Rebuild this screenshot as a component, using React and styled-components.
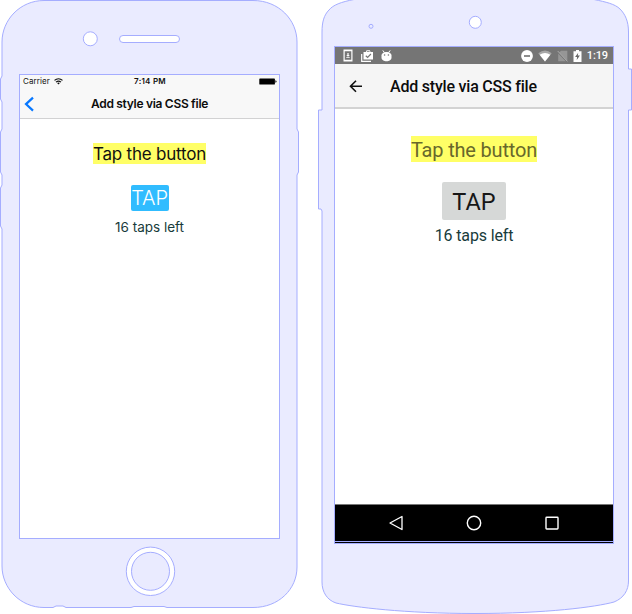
import React from "react";
import styled, { createGlobalStyle } from "styled-components";

const GlobalStyle = createGlobalStyle`
  * { box-sizing: border-box; }
  body { margin: 0; background: #fff; }
`;

const LINE = "#a5adff";
const SHELL = "#eaebff";

const Stage = styled.main`
  display: grid;
  grid-template-columns: 316px 316px;
  width: 632px;
  height: 614px;
  overflow: hidden;
`;

const Device = styled.section`
  position: relative;
  height: 614px;
  padding: ${(p) => p.$inset};
  font-family: ${(p) => p.$font}, sans-serif;
`;

const Shell = styled.svg`
  position: absolute;
  inset: 0;
  width: 316px;
  height: 614px;
`;

const Screen = styled.div`
  position: relative;
  display: flex;
  flex-direction: column;
  width: ${(p) => p.$w}px;
  height: ${(p) => p.$h}px;
  border: 1px solid ${LINE};
  background: #fff;
`;

const IosHeader = styled.header`
  height: 44px;
  background: #f8f8f8;
  border-bottom: 1px solid #d2d2d3;
`;

const IosStatus = styled.div`
  display: grid;
  grid-template-columns: 1fr auto 1fr;
  align-items: center;
  height: 13px;
  padding: 0 2px 0 3px;
  font-size: 8px;
  line-height: 13px;
  color: #111;
`;

const Carrier = styled.span`
  display: flex;
  align-items: center;
  gap: 4px;
  letter-spacing: 0.08px;
`;

const Clock = styled.span`
  font-weight: 600;
  letter-spacing: 0.25px;
`;

const BatterySlot = styled.span`
  display: flex;
  justify-content: flex-end;
`;

const IosNav = styled.div`
  display: grid;
  grid-template-columns: 20px 1fr 20px;
  align-items: center;
  height: 31px;
  padding: 0 4px;
`;

const Title = styled.h1`
  margin: 0;
  font-size: ${(p) => p.$size}px;
  font-weight: ${(p) => p.$weight};
  letter-spacing: ${(p) => p.$track || 0}px;
  line-height: 20px;
  text-align: ${(p) => p.$align || "left"};
  white-space: nowrap;
  color: #0c0c0c;
`;

const Content = styled.div`
  flex: 1;
  display: flex;
  flex-direction: column;
  align-items: center;
  padding-top: ${(p) => p.$top}px;
`;

const Highlight = styled.p`
  display: flex;
  justify-content: center;
  margin: 0;
  width: ${(p) => p.$w}px;
  height: ${(p) => p.$h}px;
  background: #ffff66;
  color: ${(p) => p.$color};
  font-size: ${(p) => p.$size}px;
  line-height: ${(p) => p.$line}px;
  letter-spacing: ${(p) => p.$track}px;
  white-space: nowrap;
`;

const TapButton = styled.button`
  display: flex;
  justify-content: center;
  margin: ${(p) => p.$gap}px 0 0;
  padding: 0;
  border: 0;
  border-radius: 2px;
  width: ${(p) => p.$w}px;
  height: ${(p) => p.$h}px;
  background: ${(p) => p.$bg};
  color: ${(p) => p.$color};
  font-family: inherit;
  font-size: ${(p) => p.$size}px;
  font-weight: ${(p) => p.$weight};
  line-height: ${(p) => p.$line}px;
  letter-spacing: ${(p) => p.$track}px;
`;

const Remaining = styled.p`
  margin: ${(p) => p.$gap}px 0 0;
  font-size: ${(p) => p.$size}px;
  line-height: 20px;
  letter-spacing: ${(p) => p.$track}px;
  color: #183b3b;
`;

const AndroidStatus = styled.div`
  display: flex;
  align-items: center;
  justify-content: space-between;
  height: 17px;
  padding: 0 5px 0 8px;
  background: #757575;
  color: #fff;
  font-size: 11px;
  font-weight: 500;
  letter-spacing: -0.1px;
  line-height: 17px;
`;

const StatusGroup = styled.span`
  display: flex;
  align-items: center;
  gap: ${(p) => p.$gap}px;
`;

const AppBar = styled.header`
  display: flex;
  align-items: center;
  height: 45px;
  padding: 2px 0 0 14px;
  gap: 27px;
  background: #f5f5f5;
  border-bottom: 2px solid #d3d3d3;
`;

const NavBar = styled.nav`
  display: flex;
  align-items: center;
  justify-content: space-between;
  height: 37px;
  padding: 0 53px;
  border-top: 1px solid #777;
  background: #000;
`;

const ScreenEdge = styled.div`
  height: 2px;
  background: #000;
  border-top: 1px solid ${LINE};
`;

function IosShell() {
  return (
    <Shell viewBox="0 0 316 614" fill={SHELL} stroke={LINE}>
      <path d="M44 .5H253C279 .5 297 20 297 42V129L298.5 132V172L297 175V567C297 589 279 607.5 253 607.5H167L164 606.5H134L131 607.5H66L63 606H56L53 607.5H44C20 607.5 2 588 2 566V229L.5 226V188L2 185V175L.5 172V132L2 129V102L.5 99V79L2 76V42C2 20 20 .5 44 .5Z" />
      <g fill="#fff">
        <circle cx="90.3" cy="38.8" r="7" />
        <rect x="119.5" y="35.5" width="60" height="7" rx="3.5" />
        <circle cx="150.5" cy="571.3" r="24.2" />
      </g>
      <circle cx="150.5" cy="571.3" r="19" />
    </Shell>
  );
}

function AndroidShell() {
  return (
    <Shell viewBox="0 0 316 614" fill={SHELL} stroke={LINE}>
      <path d="M38 -.5C25 2 17 5 13 10C8 15 6 22 6 32V110H2.5V209H5L6 211V582C6 592 11 600 20 603C37 607 88 613.5 159 613.5C230 613.5 280 607 298 602C308 598 312.5 590 312.5 581V110H315.5V69H312.5V32C312.5 21 309 14 304 9C299 4 290 2 278 -.5H38Z" />
      <circle cx="55" cy="26.3" r="2" />
      <circle cx="159.3" cy="22.3" r="6" fill="#fff" />
    </Shell>
  );
}

function IosWifi() {
  return (
    <svg width="9" height="7" viewBox="0 0 9 7" fill="none" stroke="#111" strokeWidth="1.15">
      <path d="M.5 2.4C2.8.4 6.2.4 8.5 2.4M2 4.1C3.4 2.9 5.6 2.9 7 4.1" />
      <path d="M3.1 5.1Q4.5 4.1 5.9 5.1L4.5 6.6Z" fill="#111" stroke="none" />
    </svg>
  );
}

function IosBattery() {
  return (
    <svg width="18" height="7" viewBox="0 0 18 7">
      <rect x=".3" y=".4" width="15.6" height="6.2" rx=".7" fill="#000" />
      <path d="M16.4 2.3Q17.6 2.6 17.6 3.5Q17.6 4.4 16.4 4.7Z" fill="#000" />
    </svg>
  );
}

function NotificationIcons() {
  return (
    <StatusGroup $gap={8}>
      <svg width="10" height="13" viewBox="0 0 10 13">
        <path fill="#fff" fillRule="evenodd" d="M.5 .5H9.5V12.5H.5ZM1.7 2.3V10.7H8.3V2.3Z" />
        <path fill="#fff" d="M4.4 4H5.6V6H6.8L5 7.8L3.2 6H4.4ZM3.3 8.2H6.7V9H3.3Z" />
      </svg>
      <svg width="12" height="12" viewBox="0 0 12 12">
        <path fill="#fff" fillRule="evenodd" d="M2.5 2H4.8L5.6 .3H8.8L9.6 2H12V9.5H2.5ZM6 1.2L5.8 2H8.7L8.5 1.2Z" />
        <path d="M.7 4V11.3H10" fill="none" stroke="#fff" strokeWidth="1.2" />
        <path d="M4.8 5.7L6.6 7.4L9.9 4" fill="none" stroke="#757575" strokeWidth="1.2" />
      </svg>
      <svg width="11" height="12" viewBox="0 0 11 12">
        <path d="M1.8 .4L3.5 2.7M9.2 .4L7.5 2.7" stroke="#fff" strokeWidth="1" />
        <path fill="#fff" d="M.5 5.5C.5 .8 10.5 .8 10.5 5.5V7.5C10.5 12.6 .5 12.6 .5 7.5Z" />
        <circle cx="3.6" cy="5" r=".8" fill="#757575" />
        <circle cx="7.4" cy="5" r=".8" fill="#757575" />
      </svg>
    </StatusGroup>
  );
}

function SystemIcons() {
  return (
    <StatusGroup $gap={5}>
      <svg width="12" height="12" viewBox="0 0 12 12">
        <circle cx="6" cy="6" r="5.9" fill="#fff" />
        <path d="M3 6H9" stroke="#666" strokeWidth="1.5" />
      </svg>
      <svg width="14" height="12" viewBox="0 0 14 12">
        <path d="M7 11.5L.3 3.2Q7-2.2 13.7 3.2Z" fill="#a7a7a7" />
        <path d="M7 11.5L1.6 4.8Q7 1.1 12.4 4.8Z" fill="#fff" />
      </svg>
      <svg width="11" height="12" viewBox="0 0 11 12">
        <path d="M2 2.7L4 .7H10.3V11ZM1.2 3.5V11.3H8.8Z" fill="#969696" />
        <path d="M.7 1L10.4 11.4" stroke="#aaa" />
      </svg>
      <svg width="9" height="12" viewBox="0 0 9 12">
        <path d="M.5 1.2H3V0H6V1.2H8.5V12H.5Z" fill="#fff" />
        <path d="M5.2 2.7L2.1 7H4.1L3.7 10L6.9 5.6H4.8Z" fill="#666" />
      </svg>
      <span>1:19</span>
    </StatusGroup>
  );
}

function IosPhone() {
  return (
    <Device $inset="74px 0 0 19px" $font="Inter">
      <IosShell />
      <Screen $w={261} $h={465}>
        <IosHeader>
          <IosStatus>
            <Carrier>Carrier <IosWifi /></Carrier>
            <Clock>7:14 PM</Clock>
            <BatterySlot><IosBattery /></BatterySlot>
          </IosStatus>
          <IosNav>
            <svg width="11" height="16" viewBox="0 0 11 16" fill="none" stroke="#0878ff" strokeWidth="2.2">
              <path d="M9 1.6L2 8.1L9 14.6" />
            </svg>
            <Title $size={12} $weight={600} $track={-0.3} $align="center">Add style via CSS file</Title>
          </IosNav>
        </IosHeader>
        <Content $top={24}>
          <Highlight $w={113} $h={21} $line={22} $size={17} $track={-0.2} $color="#111">Tap the button</Highlight>
          <TapButton $gap={21} $w={38} $h={26} $line={27} $size={20} $weight={300} $track={-0.1} $bg="#30bcff" $color="#fff">TAP</TapButton>
          <Remaining $gap={6} $size={13.5} $track={0}>16 taps left</Remaining>
        </Content>
      </Screen>
    </Device>
  );
}

function AndroidPhone() {
  return (
    <Device $inset="46px 0 0 18px" $font="Roboto">
      <AndroidShell />
      <Screen $w={280} $h={498}>
        <AndroidStatus>
          <NotificationIcons />
          <SystemIcons />
        </AndroidStatus>
        <AppBar>
          <svg width="14" height="16" viewBox="0 0 14 16" fill="none" stroke="#111" strokeWidth="1.6">
            <path d="M13 7.3H2M7 1.8L1.5 7.3L7 12.8" />
          </svg>
          <Title $size={16} $weight={500} $track={-0.21}>Add style via CSS file</Title>
        </AppBar>
        <Content $top={27}>
          <Highlight $w={126} $h={26} $line={29} $size={20} $track={-0.18} $color="#68682b">Tap the button</Highlight>
          <TapButton $gap={20} $w={64} $h={38} $line={41} $size={23.5} $weight={400} $track={0} $bg="#d6d8d7" $color="#171717">TAP</TapButton>
          <Remaining $gap={6} $size={16} $track={-0.15}>16 taps left</Remaining>
        </Content>
        <NavBar>
          <svg width="16" height="16" viewBox="0 0 16 16" fill="none" stroke="#fff" strokeWidth="1.3">
            <path d="M14 1.5V14.5L2 8Z" strokeLinejoin="round" />
          </svg>
          <svg width="16" height="16" viewBox="0 0 16 16" fill="none" stroke="#fff" strokeWidth="1.4">
            <circle cx="8" cy="8" r="6.7" />
          </svg>
          <svg width="16" height="16" viewBox="0 0 16 16" fill="none" stroke="#fff" strokeWidth="1.4">
            <rect x="2" y="2.2" width="12" height="11.8" rx=".7" />
          </svg>
        </NavBar>
        <ScreenEdge />
      </Screen>
    </Device>
  );
}

export default function App() {
  return (
    <>
      <GlobalStyle />
      <Stage>
        <IosPhone />
        <AndroidPhone />
      </Stage>
    </>
  );
}
